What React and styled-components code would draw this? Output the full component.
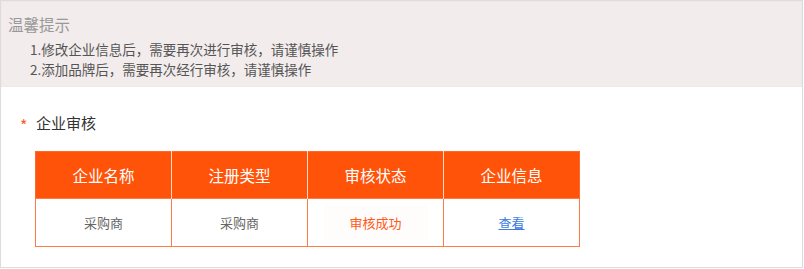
import React from "react";
import styled, { createGlobalStyle } from "styled-components";

const Global = createGlobalStyle`
  html, body { margin: 0; padding: 0; background: #fff; }
  body { font-family: "Noto Sans CJK SC", "Noto Sans", sans-serif; }
  * { box-sizing: border-box; }
`;

const Frame = styled.div`
  width: 803px;
  height: 268px;
  border: 1px solid #dcdcdc;
  background: #fff;
`;

const Notice = styled.div`
  height: 86px;
  background: #f2ecec;
  border: 1px solid #eee8e8;
  padding: 12px 0 0 6px;
`;

const NoticeTitle = styled.div`
  font-size: 15.5px;
  line-height: 20px;
  color: #999;
`;

const NoticeList = styled.div`
  margin-top: 5px;
  padding-left: 22px;
`;

const NoticeLine = styled.div`
  font-size: 13.5px;
  line-height: 20px;
  color: #555;
`;

const Section = styled.div`
  padding: 25px 0 0 34px;
`;

const SectionTitle = styled.div`
  display: flex;
  align-items: center;
  gap: 8px;
  height: 20px;
  margin-left: -15px;
  font-size: 15px;
  color: #333;
`;

const Star = styled.span`
  color: #ff5a1a;
  font-size: 16px;
  width: 8px;
  line-height: 20px;
  transform: translateY(3px);
`;

const Table = styled.table`
  margin-top: 19px;
  width: 545px;
  table-layout: fixed;
  border-collapse: collapse;
  border: 1px solid #ff6a2b;
`;

const Th = styled.th`
  height: 47px;
  padding: 0;
  background: #ff5309;
  color: #fff;
  font-weight: normal;
  font-size: 15.5px;
  border-right: 1px solid #ffd9c6;
  &:last-child { border-right: 1px solid #ff6a2b; }
`;

const Td = styled.td`
  height: 48px;
  padding: 0;
  text-align: center;
  font-size: 13px;
  color: ${(p) => (p.$tone === "success" ? "#ff5a1a" : "#666")};
  border: 1px solid #ff7a45;
`;

const Status = styled.span`
  display: inline-block;
  width: 104px;
  line-height: 35px;
  background: #fffcfc;
`;

const Link = styled.a`
  color: #3b7be3;
  text-decoration: underline;
  cursor: pointer;
`;

const heads = ["企业名称", "注册类型", "审核状态", "企业信息"];

export default function App() {
  return (
    <>
      <Global />
      <Frame>
        <Notice>
          <NoticeTitle>温馨提示</NoticeTitle>
          <NoticeList>
            <NoticeLine>1.修改企业信息后，需要再次进行审核，请谨慎操作</NoticeLine>
            <NoticeLine>2.添加品牌后，需要再次经行审核，请谨慎操作</NoticeLine>
          </NoticeList>
        </Notice>
        <Section>
          <SectionTitle>
            <Star>*</Star>
            企业审核
          </SectionTitle>
          <Table>
            <thead>
              <tr>
                {heads.map((h) => (
                  <Th key={h}>{h}</Th>
                ))}
              </tr>
            </thead>
            <tbody>
              <tr>
                <Td>采购商</Td>
                <Td>采购商</Td>
                <Td $tone="success">
                  <Status>审核成功</Status>
                </Td>
                <Td>
                  <Link>查看</Link>
                </Td>
              </tr>
            </tbody>
          </Table>
        </Section>
      </Frame>
    </>
  );
}
